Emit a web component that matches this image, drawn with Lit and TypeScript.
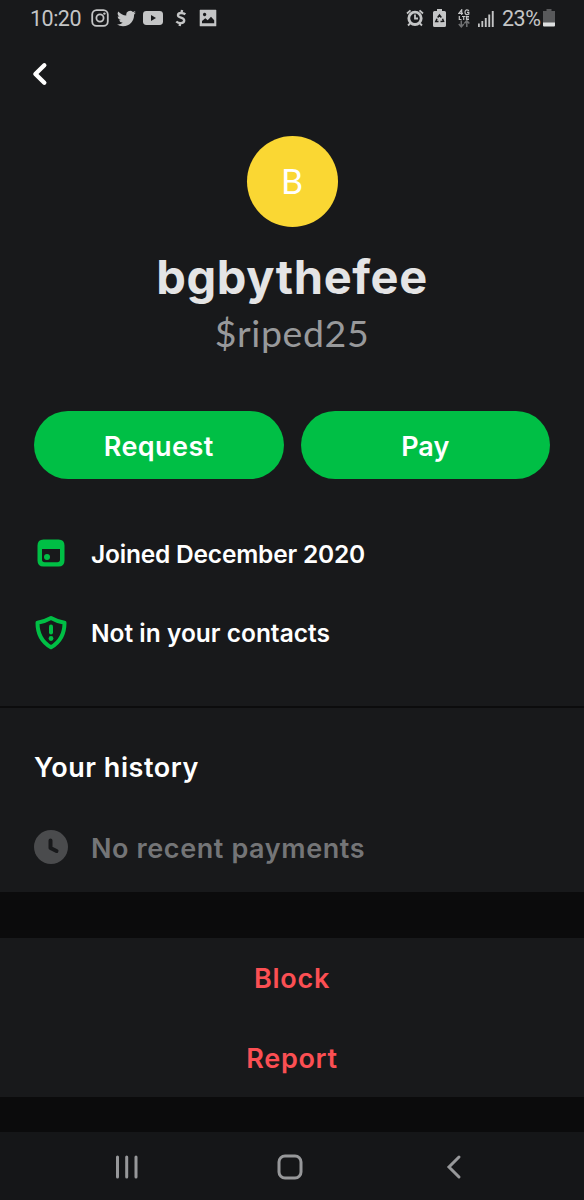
import { LitElement, html, css } from "lit";
import { customElement } from "lit/decorators.js";

@customElement("status-bar")
class StatusBar extends LitElement {
  static styles = css`
    :host { display: flex; align-items: center; justify-content: space-between; height: 36px; padding: 0 29px 0 30px; box-sizing: border-box; color: #c4c5c6; font: 400 21.5px/36px Roboto, sans-serif; }
    .group { display: flex; align-items: center; height: 36px; }
    .clock { width: 61px; letter-spacing: -0.5px; padding-top: 1px; }
    svg { display: block; flex: none; }
    .insta { margin-right: 8px; }
    .bird { margin-right: 7px; }
    .tube { margin-right: 12px; }
    .cash { margin-right: 12px; }
    .alarm { margin-right: 9px; }
    .saver { margin-right: 12px; }
    .lte { margin-right: 8px; }
    .bars { margin-right: 8px; }
    .percent { width: 41px; white-space: nowrap; letter-spacing: -0.5px; padding-top: 1px; }
  `;
  render() {
    return html`
      <div class="group">
        <span class="clock">10:20</span>
        <svg class="insta" width="18" height="18" viewBox="0 0 18 18" fill="none" stroke="#c4c5c6" stroke-width="1.8">
          <rect x="1.2" y="1.2" width="15.6" height="15.6" rx="4.4" /><circle cx="9" cy="9" r="3.6" /><circle cx="13.4" cy="4.6" r="1.2" fill="#c4c5c6" stroke="none" />
        </svg>
        <svg class="bird" width="19" height="17" viewBox="0 2 24 20" fill="#c4c5c6"><path d="M23.95 4.57a10 10 0 0 1-2.82.77 4.96 4.96 0 0 0 2.16-2.72 9.9 9.9 0 0 1-3.13 1.19 4.92 4.92 0 0 0-8.38 4.48C7.69 8.09 4.07 6.13 1.64 3.16a4.93 4.93 0 0 0 1.52 6.57 4.9 4.9 0 0 1-2.23-.61v.06a4.92 4.92 0 0 0 3.95 4.83 5 5 0 0 1-2.21.08 4.94 4.94 0 0 0 4.6 3.42A9.87 9.87 0 0 1 0 19.54a13.99 13.99 0 0 0 7.55 2.21c9.05 0 14-7.5 14-13.99 0-.21 0-.42-.02-.63a9.94 9.94 0 0 0 2.42-2.56z" /></svg>
        <svg class="tube" width="20" height="16" viewBox="0 0 20 16"><rect y="1" width="20" height="14" rx="3.4" fill="#c4c5c6" /><path d="M8 5v6l5-3z" fill="#18191b" /></svg>
        <svg class="cash" width="12" height="18" viewBox="0 0 12 18" fill="none" stroke="#c4c5c6" stroke-width="2.4"><path d="M10.3 5.4C8.7 3.8 3.3 3 3 6.1c-.2 3.2 6.500 2 6.200 5.600-.3 3.300-5.600 3-7.900.8M7.100 1l-.7 3M5.300 14l-.7 3" /></svg>
        <svg width="18" height="18" viewBox="0 0 18 18"><path fill="#c4c5c6" fill-rule="evenodd" d="M1.200 .8h15.600q.5 0 .5.500v15.400q0 .5-.5.500H1.200q-.5 0-.5-.5V1.300q0-.5.500-.5zM3 14.200h12.200v-3L12 7.800l-3.300 3.400-2.400-2L3 12zM5.600 3.800a1.700 1.700 0 1 0 .01 0z" /></svg>
      </div>
      <div class="group">
        <svg class="alarm" width="18" height="18" viewBox="0 0 18 18" fill="none" stroke="#c4c5c6"><circle cx="9" cy="9.300" r="6.200" stroke-width="2.800" /><path stroke-width="1.800" d="M9 5.500v4h3M1 4.500 4.500 1.300M17 4.500l-3.500-3.200M4 14.500l-2 2M14 14.500l2 2" /></svg>
        <svg class="saver" width="13" height="18" viewBox="0 0 13 18"><path fill="#c4c5c6" d="M4 0h5v2h2.500Q13 2 13 3.500v13q0 1.500-1.500 1.500h-10Q0 18 0 16.500v-13Q0 2 1.500 2H4z" /><path fill="none" stroke="#18191b" stroke-width="1.500" d="m4.700 8.500 1.800-2.500 1.800 2.500M9.500 9.700l1 2.600-3 .2M5.500 12.500H2.800L4 9.700" /></svg>
        <svg class="lte" width="12" height="19" viewBox="0 0 12 19" fill="none" stroke="#c4c5c6" stroke-width="1.200"><path d="M3.700 6V.8L1 4.300h4M11 1.600Q7.200-.2 7 3.100q.2 3.500 3.800 2V3.300H9M1.300 7v3.500h2.200M4 7.500h3.400M5.700 7.500v3.500M11 7.500H8.500v3H11M8.500 9H11" /><path stroke="#707173" stroke-width="1.500" d="M3.300 11.500v6M.8 15l2.500 2.800L5.800 15M8.800 18v-6M6.300 14.500l2.500-2.800 2.500 2.800" /></svg>
        <svg class="bars" width="16" height="17" viewBox="0 0 16 17" fill="#c4c5c6"><path d="M0 13.500h1.800V17H0zM3.400 11h1.800v6H3.400zM6.800 8h1.900v9H6.800zM10.300 4.500h1.900V17h-1.900zM13.800 1h1.900v16h-1.900z" /></svg>
        <span class="percent">23%</span>
        <svg width="12" height="18" viewBox="0 0 12 18"><path fill="#58595b" d="M3.500 0h5v2H12v12H0V2h3.500z" /><path fill="#dedfe0" d="M0 13.500h12v3q0 1-1 1H1q-1 0-1-1z" /></svg>
      </div>
    `;
  }
}

@customElement("app-root")
class AppRoot extends LitElement {
  static styles = css`
    :host { display: flex; flex-direction: column; width: 584px; height: 1200px; overflow: hidden; background: #18191b; color: #fff; font-family: Inter, sans-serif; font-weight: 600; }
    svg { display: block; flex: none; }
    .header { height: 100px; padding: 26px 0 0 32px; box-sizing: border-box; }
    .profile { display: flex; flex-direction: column; align-items: center; height: 275px; }
    .avatar { width: 91px; height: 91px; border-radius: 50%; background: #fad733; text-align: center; font: 400 34px/90px Lato, sans-serif; }
    .name { margin-top: 20px; font: 700 47px/60px Inter, sans-serif; letter-spacing: 0.600px; color: #e4e4e5; }
    .tag { margin-top: 4px; font: 400 37.500px/44px Lato, sans-serif; letter-spacing: 0.600px; color: #98999b; }
    .buttons { display: grid; grid-template-columns: 1fr 1fr; gap: 17px; padding: 0 34px; height: 68px; }
    .button { background: #00bf45; border-radius: 34px; height: 68px; padding-top: 2px; box-sizing: border-box; text-align: center; font-size: 27px; line-height: 68px; }
    .req { letter-spacing: 0.450px; }
    .facts { height: 227px; padding-top: 34px; box-sizing: border-box; }
    .row { display: flex; align-items: center; height: 80px; padding-left: 34px; font-size: 24.500px; }
    .row svg { margin-right: 23px; }
    .row span { padding-top: 2px; }
    .joined { letter-spacing: -0.200px; }
    .contacts span { padding-top: 0; }
    .rule { height: 2px; background: #0c0c0d; }
    .history { height: 184px; padding-top: 19px; box-sizing: border-box; }
    .title { height: 80px; padding-left: 34px; line-height: 82px; font-size: 27px; letter-spacing: 0.550px; }
    .muted { color: #747577; font-size: 27px; letter-spacing: 0.600px; }
    .band { height: 46px; background: #0b0b0c; }
    .actions { height: 159px; text-align: center; color: #fb4f53; font-size: 27px; line-height: 82px; letter-spacing: 0.700px; }
    .action { height: 79.500px; }
    .band.low { height: 35px; }
    .nav { height: 68px; display: flex; align-items: center; background: #151618; padding: 2px 0 0 115px; box-sizing: border-box; }
    .home { margin: 0 143px 0 138px; }
  `;
  render() {
    return html`
      <status-bar></status-bar>
      <div class="header"><svg width="16" height="24" viewBox="0 0 16 24" fill="none" stroke="#fff" stroke-width="4.400" stroke-linecap="round" stroke-linejoin="round"><path d="M12.300 3.300 3.400 12l8.900 8.700" /></svg></div>
      <div class="profile">
        <div class="avatar">B</div>
        <div class="name"><span>bgbythefee</span></div>
        <div class="tag"><span>$riped25</span></div>
      </div>
      <div class="buttons"><div class="button req"><span>Request</span></div><div class="button pay"><span>Pay</span></div></div>
      <div class="facts">
        <div class="row joined"><svg width="34" height="34" viewBox="0 0 34 34"><path fill="#00bf45" fill-rule="evenodd" d="M9.500 3.500h15q6 0 6 6v15q0 6-6 6h-15q-6 0-6-6v-15q0-6 6-6zM8 13v10.500q0 2.700 2.700 2.700h12.600q2.700 0 2.700-2.700V13z" /><circle cx="13" cy="21" r="3" fill="#00bf45" /></svg><span>Joined December 2020</span></div>
        <div class="row contacts"><svg width="34" height="36" viewBox="0 0 34 36" fill="none" stroke="#00bf45" stroke-linejoin="round"><path stroke-width="4" d="M17 3Q23.500 6.700 30.500 7.700 30.500 24.500 17 32.300 3.500 24.500 3.500 7.700 10.500 6.700 17 3z" /><path stroke-width="4" stroke-linecap="round" d="M17 11.500v6" /><circle cx="17" cy="23.500" r="2.400" fill="#00bf45" stroke="none" /></svg><span>Not in your contacts</span></div>
      </div>
      <div class="rule"></div>
      <div class="history">
        <div class="title"><span>Your history</span></div>
        <div class="row muted"><svg width="34" height="34" viewBox="0 0 34 34"><circle cx="17" cy="17" r="17" fill="#4a4b4d" /><path d="M16.500 10.500V18l6 3" fill="none" stroke="#18191b" stroke-width="4" stroke-linecap="round" stroke-linejoin="round" /></svg><span>No recent payments</span></div>
      </div>
      <div class="band"></div>
      <div class="actions"><div class="action"><span class="block">Block</span></div><div class="action"><span class="report">Report</span></div></div>
      <div class="band low"></div>
      <div class="nav">
        <svg width="24" height="24" viewBox="0 0 24 24" stroke="#97989a" stroke-width="3" stroke-linecap="round"><path d="M2.500 2v20M11.700 2v20M21 2v20" /></svg>
        <svg class="home" width="26" height="26" viewBox="0 0 26 26" fill="none" stroke="#97989a" stroke-width="3"><rect x="2" y="2" width="22" height="22" rx="6" /></svg>
        <svg width="16" height="26" viewBox="0 0 16 26" fill="none" stroke="#97989a" stroke-width="3" stroke-linecap="round"><path d="M13 3 3 13l10 10" /></svg>
      </div>
    `;
  }
}
